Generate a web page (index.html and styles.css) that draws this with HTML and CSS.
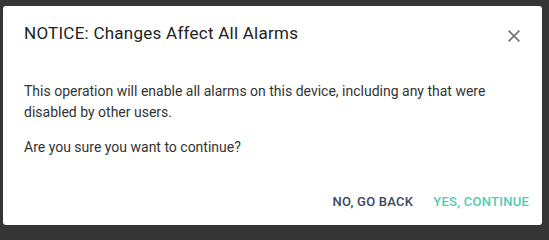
FILE: index.html
```html
<!DOCTYPE html>
<html>
<head>
<meta charset="utf-8">
<link rel="stylesheet" href="styles.css">
</head>
<body>
<div class="dialog">
  <div class="header">
    <h2 class="title">NOTICE: Changes Affect All Alarms</h2>
    <button class="close" aria-label="Close">
      <svg width="12" height="12" viewBox="0 0 12 12"><path d="M0.6 0.6 L11.4 11.4 M11.4 0.6 L0.6 11.4" stroke="#757575" stroke-width="1.6" fill="none"/></svg>
    </button>
  </div>
  <div class="content">
    <p class="text">This operation will enable all alarms on this device, including any that were disabled by other users.</p>
    <p class="text">Are you sure you want to continue?</p>
  </div>
  <div class="actions">
    <button class="btn btn-back">NO, GO BACK</button>
    <button class="btn btn-yes">YES, CONTINUE</button>
  </div>
</div>
</body>
</html>
```

FILE: styles.css
```css
html, body {
  margin: 0;
  padding: 0;
  background: #353535;
  font-family: Roboto, "Liberation Sans", sans-serif;
}
body {
  padding: 6px 0 0 3px;
}
.dialog {
  width: 539px;
  height: 219px;
  background: #ffffff;
  border-radius: 3px;
  box-sizing: border-box;
  display: flex;
  flex-direction: column;
}
.header {
  display: flex;
  align-items: center;
  justify-content: space-between;
  padding: 15px 22px 0 21px;
}
.title {
  margin: 0;
  font-size: 17px;
  line-height: 24px;
  font-weight: 400;
  letter-spacing: 0.25px;
  color: #222222;
}
.close {
  border: 0;
  background: none;
  padding: 0;
  width: 12px;
  height: 12px;
  display: flex;
  margin-top: 5px;
  cursor: pointer;
}
.content {
  padding: 36px 24px 0 21px;
}
.text {
  margin: 0 0 14px 0;
  font-size: 14px;
  line-height: 21px;
  color: #333333;
}
.actions {
  display: flex;
  justify-content: flex-end;
  gap: 4px;
  padding: 14px 5px 0 0;
}
.btn {
  border: 0;
  background: none;
  font-family: Roboto, "Liberation Sans", sans-serif;
  font-size: 13px;
  font-weight: 500;
  line-height: 16px;
  padding: 8px 8px;
  letter-spacing: 0.25px;
  cursor: pointer;
}
.btn-back {
  color: #3a4662;
}
.btn-yes {
  color: #4ecdb4;
}
```
